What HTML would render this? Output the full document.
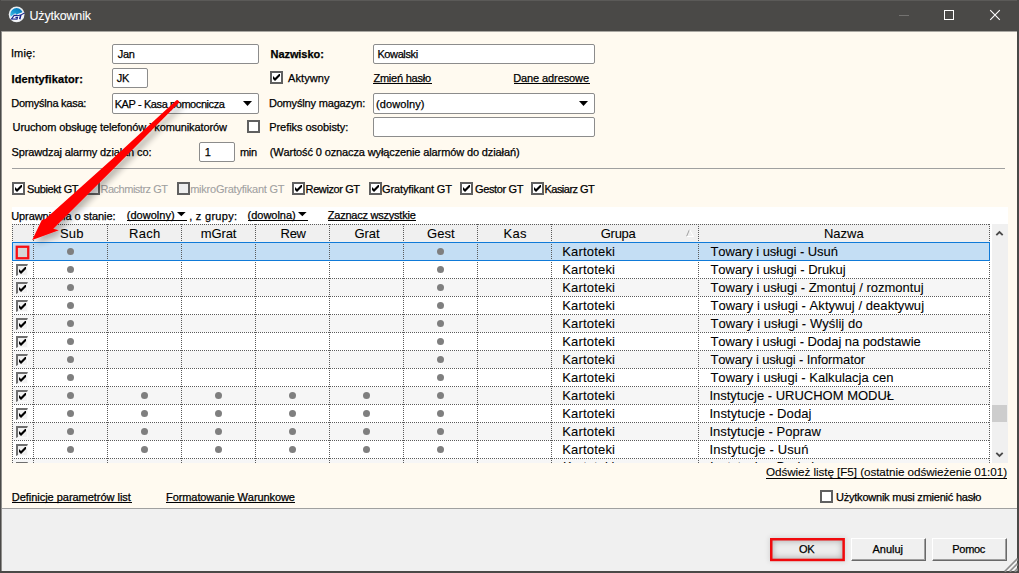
<!DOCTYPE html><html><head><meta charset="utf-8"><title>Użytkownik</title><style>
*{box-sizing:border-box;margin:0;padding:0}
html,body{width:1019px;height:573px;overflow:hidden;background:#fffaf0}
body{position:relative;font-family:"Liberation Sans",sans-serif;color:#000;font-kerning:none;font-variant-ligatures:none}
.a{position:absolute}
.t{position:absolute;white-space:nowrap;line-height:1;height:0;-webkit-text-stroke:0.25px currentColor}
.t.big{-webkit-text-stroke:0.08px currentColor}
.t span{position:absolute;left:0;bottom:0;display:block;line-height:1}
.inp{position:absolute;background:#fff;border:1px solid #8c8c8c;border-radius:2px}
.cb{position:absolute;width:13px;height:13px;border:2px solid #606060;background:#fff}
.cb.dis{background:#eeeeee}
.btn{position:absolute;background:#f0f0f0;border-top:1px solid #fff;border-left:1px solid #fff;border-right:1px solid #696969;border-bottom:1px solid #696969;box-shadow:inset -1px -1px 0 #a0a0a0}
.g{font-family:"Liberation Sans",sans-serif;font-size:13px;position:absolute;white-space:nowrap;line-height:15px;height:15px}
</style></head><body>
<div class="a" style="left:12px;top:207px;width:996px;height:256px;background:#fff"></div>
<div class="a" style="left:0;top:508px;width:1019px;height:65px;background:#f0f0f0;border-top:1px solid #a0a0a0"></div>
<div class="a" style="left:0;top:0;width:1019px;height:31px;background:#4a4947"></div>
<div class="a" style="left:0;top:0;width:1019px;height:1px;background:#5b5a58"></div>
<div class="a" style="left:1px;top:31px;width:1016px;height:1px;background:#a9a7a2"></div>
<div class="a" style="left:0;top:0;width:1px;height:573px;background:#4a4947"></div>
<div class="a" style="left:1px;top:31px;width:1px;height:542px;background:#8f8e8b"></div>
<div class="a" style="left:1017px;top:0;width:2px;height:573px;background:#4a4947"></div>
<div class="a" style="left:0;top:571px;width:1019px;height:2px;background:#4a4947"></div>
<svg class="a" style="left:5px;top:3px" width="24" height="24" viewBox="5 3 24 24">
<defs><linearGradient id="ig" gradientUnits="userSpaceOnUse" x1="18" y1="8" x2="12.5" y2="17"><stop offset="0" stop-color="#0579bd"/><stop offset="0.5" stop-color="#1596d0"/><stop offset="1" stop-color="#4cbfe8"/></linearGradient>
<clipPath id="ic"><circle cx="16.6" cy="14.5" r="6.4"/></clipPath></defs>
<circle cx="16.6" cy="14.4" r="7.9" fill="#eceff3"/>
<circle cx="16.6" cy="14.4" r="6.4" fill="#fbfcfd"/>
<path d="M9,17.2 L11.2,16.4 L13.6,14.6 L15.2,13.2 L16.2,14.6 L22.6,12.2 L24,8 L9,5 Z" fill="url(#ig)" clip-path="url(#ic)"/>
<path d="M22.2,12.3 L25,12.4 L22.6,13.6 Z" fill="#f4f6f9"/>
<path d="M17.7,15.3 L14.2,15.3 L11.5,19 L17,19.2 L17.5,17.3 L15.4,17.3" fill="none" stroke="#18268c" stroke-width="1.2"/>
<path d="M17.2,15.7 L21.4,14.8 L24.6,12.9" fill="none" stroke="#18268c" stroke-width="1.1"/>
<path d="M20.8,15 L19.7,19.3" fill="none" stroke="#18268c" stroke-width="1.6"/>
</svg>
<div class="a" style="left:899px;top:15px;width:10px;height:1px;background:#737270"></div>
<div class="a" style="left:944px;top:10px;width:10px;height:10px;border:1px solid #fff"></div>
<svg class="a" style="left:989px;top:9px" width="12" height="12" viewBox="0 0 12 12"><path d="M1.2,1.2 L10.8,10.8 M10.8,1.2 L1.2,10.8" stroke="#fff" stroke-width="1.1" fill="none"/></svg>
<div class="inp" style="left:112px;top:44px;width:147px;height:20px"></div>
<div class="inp" style="left:112px;top:68px;width:36px;height:20px"></div>
<div class="inp" style="left:112px;top:93px;width:147px;height:21px"></div>
<div class="inp" style="left:373px;top:44px;width:222px;height:20px"></div>
<div class="inp" style="left:373px;top:93px;width:222px;height:21px"></div>
<div class="inp" style="left:373px;top:117px;width:222px;height:20px"></div>
<div class="inp" style="left:199px;top:142px;width:36px;height:20px"></div>
<svg class="a" style="left:243px;top:101px" width="9" height="5" viewBox="0 0 9 5"><path d="M0,0 L9,0 L4.5,5 Z" fill="#000"/></svg>
<svg class="a" style="left:579px;top:101px" width="9" height="5" viewBox="0 0 9 5"><path d="M0,0 L9,0 L4.5,5 Z" fill="#000"/></svg>
<svg class="a" style="left:177px;top:212px" width="9" height="5" viewBox="0 0 9 5"><path d="M0,0 L8.6,0 L4.3,4.3 Z" fill="#000"/></svg>
<svg class="a" style="left:298px;top:212px" width="9" height="5" viewBox="0 0 9 5"><path d="M0,0 L8.6,0 L4.3,4.3 Z" fill="#000"/></svg>
<div class="cb" style="left:270px;top:71px"></div>
<svg class="a" style="left:273px;top:74px" width="7" height="7" viewBox="0 0 7 7"><path d="M0,2 L2,4 L7,-1 L7,2 L2,7 L0,5 Z" fill="#000"/></svg>
<div class="cb" style="left:247px;top:120px"></div>
<div class="cb" style="left:12px;top:182px"></div>
<svg class="a" style="left:15px;top:185px" width="7" height="7" viewBox="0 0 7 7"><path d="M0,2 L2,4 L7,-1 L7,2 L2,7 L0,5 Z" fill="#000"/></svg>
<div class="cb dis" style="left:87px;top:182px"></div>
<div class="cb dis" style="left:177px;top:182px"></div>
<div class="cb" style="left:292px;top:182px"></div>
<svg class="a" style="left:295px;top:185px" width="7" height="7" viewBox="0 0 7 7"><path d="M0,2 L2,4 L7,-1 L7,2 L2,7 L0,5 Z" fill="#000"/></svg>
<div class="cb" style="left:369px;top:182px"></div>
<svg class="a" style="left:372px;top:185px" width="7" height="7" viewBox="0 0 7 7"><path d="M0,2 L2,4 L7,-1 L7,2 L2,7 L0,5 Z" fill="#000"/></svg>
<div class="cb" style="left:460px;top:182px"></div>
<svg class="a" style="left:463px;top:185px" width="7" height="7" viewBox="0 0 7 7"><path d="M0,2 L2,4 L7,-1 L7,2 L2,7 L0,5 Z" fill="#000"/></svg>
<div class="cb" style="left:531px;top:182px"></div>
<svg class="a" style="left:534px;top:185px" width="7" height="7" viewBox="0 0 7 7"><path d="M0,2 L2,4 L7,-1 L7,2 L2,7 L0,5 Z" fill="#000"/></svg>
<div class="cb" style="left:820px;top:490px"></div>
<div class="a" style="left:12px;top:168px;width:993px;height:1px;background:#a0a0a0"></div>
<div class="a" style="left:12px;top:224px;width:978px;height:18px;background:#f0f0f0"></div>
<div class="a" style="left:12px;top:242px;width:978px;height:19px;background:#c4def4"></div>
<div class="a" style="left:12px;top:279px;width:978px;height:17px;background:#f6f6f6"></div>
<div class="a" style="left:12px;top:315px;width:978px;height:17px;background:#f6f6f6"></div>
<div class="a" style="left:12px;top:351px;width:978px;height:17px;background:#f6f6f6"></div>
<div class="a" style="left:12px;top:387px;width:978px;height:17px;background:#f6f6f6"></div>
<div class="a" style="left:12px;top:423px;width:978px;height:17px;background:#f6f6f6"></div>
<div class="a" style="left:12px;top:459px;width:978px;height:4px;background:#f6f6f6"></div>
<svg class="a" style="left:0;top:0" width="1019" height="573" shape-rendering="crispEdges">
<line x1="12" y1="224.5" x2="990" y2="224.5" stroke="#5a5a5a" stroke-width="1" stroke-dasharray="1 1"/>
<line x1="12" y1="278.5" x2="990" y2="278.5" stroke="#5a5a5a" stroke-width="1" stroke-dasharray="1 1"/>
<line x1="12" y1="296.5" x2="990" y2="296.5" stroke="#5a5a5a" stroke-width="1" stroke-dasharray="1 1"/>
<line x1="12" y1="314.5" x2="990" y2="314.5" stroke="#5a5a5a" stroke-width="1" stroke-dasharray="1 1"/>
<line x1="12" y1="332.5" x2="990" y2="332.5" stroke="#5a5a5a" stroke-width="1" stroke-dasharray="1 1"/>
<line x1="12" y1="350.5" x2="990" y2="350.5" stroke="#5a5a5a" stroke-width="1" stroke-dasharray="1 1"/>
<line x1="12" y1="368.5" x2="990" y2="368.5" stroke="#5a5a5a" stroke-width="1" stroke-dasharray="1 1"/>
<line x1="12" y1="386.5" x2="990" y2="386.5" stroke="#5a5a5a" stroke-width="1" stroke-dasharray="1 1"/>
<line x1="12" y1="404.5" x2="990" y2="404.5" stroke="#5a5a5a" stroke-width="1" stroke-dasharray="1 1"/>
<line x1="12" y1="422.5" x2="990" y2="422.5" stroke="#5a5a5a" stroke-width="1" stroke-dasharray="1 1"/>
<line x1="12" y1="440.5" x2="990" y2="440.5" stroke="#5a5a5a" stroke-width="1" stroke-dasharray="1 1"/>
<line x1="12" y1="458.5" x2="990" y2="458.5" stroke="#5a5a5a" stroke-width="1" stroke-dasharray="1 1"/>
<line x1="12.5" y1="224" x2="12.5" y2="463" stroke="#5a5a5a" stroke-width="1" stroke-dasharray="1 1"/>
<line x1="33.5" y1="224" x2="33.5" y2="463" stroke="#5a5a5a" stroke-width="1" stroke-dasharray="1 1"/>
<line x1="107.5" y1="224" x2="107.5" y2="463" stroke="#5a5a5a" stroke-width="1" stroke-dasharray="1 1"/>
<line x1="181.5" y1="224" x2="181.5" y2="463" stroke="#5a5a5a" stroke-width="1" stroke-dasharray="1 1"/>
<line x1="255.5" y1="224" x2="255.5" y2="463" stroke="#5a5a5a" stroke-width="1" stroke-dasharray="1 1"/>
<line x1="329.5" y1="224" x2="329.5" y2="463" stroke="#5a5a5a" stroke-width="1" stroke-dasharray="1 1"/>
<line x1="403.5" y1="224" x2="403.5" y2="463" stroke="#5a5a5a" stroke-width="1" stroke-dasharray="1 1"/>
<line x1="477.5" y1="224" x2="477.5" y2="463" stroke="#5a5a5a" stroke-width="1" stroke-dasharray="1 1"/>
<line x1="551.5" y1="224" x2="551.5" y2="463" stroke="#5a5a5a" stroke-width="1" stroke-dasharray="1 1"/>
<line x1="698.5" y1="224" x2="698.5" y2="463" stroke="#5a5a5a" stroke-width="1" stroke-dasharray="1 1"/>
<line x1="989.5" y1="224" x2="989.5" y2="463" stroke="#5a5a5a" stroke-width="1" stroke-dasharray="1 1"/>
</svg>
<div class="a" style="left:12px;top:242px;width:978px;height:19px;border:1px solid #0f7ad8"></div>
<svg class="a" style="left:686px;top:229px" width="8" height="8" viewBox="0 0 8 8"><path d="M0.5,7.5 L3.5,0.5" stroke="#a0a0a0" stroke-width="1" fill="none"/><path d="M3.5,0.5 L7.5,7.5 L0.5,7.5" stroke="#fff" stroke-width="1" fill="none"/></svg>
<div class="a" style="left:67.0px;top:248px;width:7px;height:7px;border-radius:50%;background:#7f7f7f"></div>
<div class="a" style="left:437.0px;top:248px;width:7px;height:7px;border-radius:50%;background:#7f7f7f"></div>
<svg class="a" style="left:14px;top:244px" width="18" height="18" viewBox="14 244 18 18"><rect x="16.75" y="246.75" width="11.5" height="11.5" fill="#d6d6d6" stroke="#f90f12" stroke-width="2.3"/></svg>
<div class="a" style="left:67.0px;top:266px;width:7px;height:7px;border-radius:50%;background:#7f7f7f"></div>
<div class="a" style="left:437.0px;top:266px;width:7px;height:7px;border-radius:50%;background:#7f7f7f"></div>
<div class="a" style="left:16px;top:264px;width:12px;height:12px;border-top:2px solid #6e6e6e;border-left:2px solid #6e6e6e;border-right:1px solid #fbfbfb;border-bottom:1px solid #fbfbfb;background:#f1f1f1"></div>
<svg class="a" style="left:19px;top:267px" width="7" height="7" viewBox="0 0 7 7"><path d="M0,2 L2,4 L7,-1 L7,2 L2,7 L0,5 Z" fill="#000"/></svg>
<div class="a" style="left:67.0px;top:284px;width:7px;height:7px;border-radius:50%;background:#7f7f7f"></div>
<div class="a" style="left:437.0px;top:284px;width:7px;height:7px;border-radius:50%;background:#7f7f7f"></div>
<div class="a" style="left:16px;top:282px;width:12px;height:12px;border-top:2px solid #6e6e6e;border-left:2px solid #6e6e6e;border-right:1px solid #fbfbfb;border-bottom:1px solid #fbfbfb;background:#f1f1f1"></div>
<svg class="a" style="left:19px;top:285px" width="7" height="7" viewBox="0 0 7 7"><path d="M0,2 L2,4 L7,-1 L7,2 L2,7 L0,5 Z" fill="#000"/></svg>
<div class="a" style="left:67.0px;top:302px;width:7px;height:7px;border-radius:50%;background:#7f7f7f"></div>
<div class="a" style="left:437.0px;top:302px;width:7px;height:7px;border-radius:50%;background:#7f7f7f"></div>
<div class="a" style="left:16px;top:300px;width:12px;height:12px;border-top:2px solid #6e6e6e;border-left:2px solid #6e6e6e;border-right:1px solid #fbfbfb;border-bottom:1px solid #fbfbfb;background:#f1f1f1"></div>
<svg class="a" style="left:19px;top:303px" width="7" height="7" viewBox="0 0 7 7"><path d="M0,2 L2,4 L7,-1 L7,2 L2,7 L0,5 Z" fill="#000"/></svg>
<div class="a" style="left:67.0px;top:320px;width:7px;height:7px;border-radius:50%;background:#7f7f7f"></div>
<div class="a" style="left:437.0px;top:320px;width:7px;height:7px;border-radius:50%;background:#7f7f7f"></div>
<div class="a" style="left:16px;top:318px;width:12px;height:12px;border-top:2px solid #6e6e6e;border-left:2px solid #6e6e6e;border-right:1px solid #fbfbfb;border-bottom:1px solid #fbfbfb;background:#f1f1f1"></div>
<svg class="a" style="left:19px;top:321px" width="7" height="7" viewBox="0 0 7 7"><path d="M0,2 L2,4 L7,-1 L7,2 L2,7 L0,5 Z" fill="#000"/></svg>
<div class="a" style="left:67.0px;top:338px;width:7px;height:7px;border-radius:50%;background:#7f7f7f"></div>
<div class="a" style="left:437.0px;top:338px;width:7px;height:7px;border-radius:50%;background:#7f7f7f"></div>
<div class="a" style="left:16px;top:336px;width:12px;height:12px;border-top:2px solid #6e6e6e;border-left:2px solid #6e6e6e;border-right:1px solid #fbfbfb;border-bottom:1px solid #fbfbfb;background:#f1f1f1"></div>
<svg class="a" style="left:19px;top:339px" width="7" height="7" viewBox="0 0 7 7"><path d="M0,2 L2,4 L7,-1 L7,2 L2,7 L0,5 Z" fill="#000"/></svg>
<div class="a" style="left:67.0px;top:356px;width:7px;height:7px;border-radius:50%;background:#7f7f7f"></div>
<div class="a" style="left:437.0px;top:356px;width:7px;height:7px;border-radius:50%;background:#7f7f7f"></div>
<div class="a" style="left:16px;top:354px;width:12px;height:12px;border-top:2px solid #6e6e6e;border-left:2px solid #6e6e6e;border-right:1px solid #fbfbfb;border-bottom:1px solid #fbfbfb;background:#f1f1f1"></div>
<svg class="a" style="left:19px;top:357px" width="7" height="7" viewBox="0 0 7 7"><path d="M0,2 L2,4 L7,-1 L7,2 L2,7 L0,5 Z" fill="#000"/></svg>
<div class="a" style="left:67.0px;top:374px;width:7px;height:7px;border-radius:50%;background:#7f7f7f"></div>
<div class="a" style="left:437.0px;top:374px;width:7px;height:7px;border-radius:50%;background:#7f7f7f"></div>
<div class="a" style="left:16px;top:372px;width:12px;height:12px;border-top:2px solid #6e6e6e;border-left:2px solid #6e6e6e;border-right:1px solid #fbfbfb;border-bottom:1px solid #fbfbfb;background:#f1f1f1"></div>
<svg class="a" style="left:19px;top:375px" width="7" height="7" viewBox="0 0 7 7"><path d="M0,2 L2,4 L7,-1 L7,2 L2,7 L0,5 Z" fill="#000"/></svg>
<div class="a" style="left:67.0px;top:392px;width:7px;height:7px;border-radius:50%;background:#7f7f7f"></div>
<div class="a" style="left:141.0px;top:392px;width:7px;height:7px;border-radius:50%;background:#7f7f7f"></div>
<div class="a" style="left:215.0px;top:392px;width:7px;height:7px;border-radius:50%;background:#7f7f7f"></div>
<div class="a" style="left:289.0px;top:392px;width:7px;height:7px;border-radius:50%;background:#7f7f7f"></div>
<div class="a" style="left:363.0px;top:392px;width:7px;height:7px;border-radius:50%;background:#7f7f7f"></div>
<div class="a" style="left:437.0px;top:392px;width:7px;height:7px;border-radius:50%;background:#7f7f7f"></div>
<div class="a" style="left:16px;top:390px;width:12px;height:12px;border-top:2px solid #6e6e6e;border-left:2px solid #6e6e6e;border-right:1px solid #fbfbfb;border-bottom:1px solid #fbfbfb;background:#f1f1f1"></div>
<svg class="a" style="left:19px;top:393px" width="7" height="7" viewBox="0 0 7 7"><path d="M0,2 L2,4 L7,-1 L7,2 L2,7 L0,5 Z" fill="#000"/></svg>
<div class="a" style="left:67.0px;top:410px;width:7px;height:7px;border-radius:50%;background:#7f7f7f"></div>
<div class="a" style="left:141.0px;top:410px;width:7px;height:7px;border-radius:50%;background:#7f7f7f"></div>
<div class="a" style="left:215.0px;top:410px;width:7px;height:7px;border-radius:50%;background:#7f7f7f"></div>
<div class="a" style="left:289.0px;top:410px;width:7px;height:7px;border-radius:50%;background:#7f7f7f"></div>
<div class="a" style="left:363.0px;top:410px;width:7px;height:7px;border-radius:50%;background:#7f7f7f"></div>
<div class="a" style="left:437.0px;top:410px;width:7px;height:7px;border-radius:50%;background:#7f7f7f"></div>
<div class="a" style="left:16px;top:408px;width:12px;height:12px;border-top:2px solid #6e6e6e;border-left:2px solid #6e6e6e;border-right:1px solid #fbfbfb;border-bottom:1px solid #fbfbfb;background:#f1f1f1"></div>
<svg class="a" style="left:19px;top:411px" width="7" height="7" viewBox="0 0 7 7"><path d="M0,2 L2,4 L7,-1 L7,2 L2,7 L0,5 Z" fill="#000"/></svg>
<div class="a" style="left:67.0px;top:428px;width:7px;height:7px;border-radius:50%;background:#7f7f7f"></div>
<div class="a" style="left:141.0px;top:428px;width:7px;height:7px;border-radius:50%;background:#7f7f7f"></div>
<div class="a" style="left:215.0px;top:428px;width:7px;height:7px;border-radius:50%;background:#7f7f7f"></div>
<div class="a" style="left:289.0px;top:428px;width:7px;height:7px;border-radius:50%;background:#7f7f7f"></div>
<div class="a" style="left:363.0px;top:428px;width:7px;height:7px;border-radius:50%;background:#7f7f7f"></div>
<div class="a" style="left:437.0px;top:428px;width:7px;height:7px;border-radius:50%;background:#7f7f7f"></div>
<div class="a" style="left:16px;top:426px;width:12px;height:12px;border-top:2px solid #6e6e6e;border-left:2px solid #6e6e6e;border-right:1px solid #fbfbfb;border-bottom:1px solid #fbfbfb;background:#f1f1f1"></div>
<svg class="a" style="left:19px;top:429px" width="7" height="7" viewBox="0 0 7 7"><path d="M0,2 L2,4 L7,-1 L7,2 L2,7 L0,5 Z" fill="#000"/></svg>
<div class="a" style="left:67.0px;top:446px;width:7px;height:7px;border-radius:50%;background:#7f7f7f"></div>
<div class="a" style="left:141.0px;top:446px;width:7px;height:7px;border-radius:50%;background:#7f7f7f"></div>
<div class="a" style="left:215.0px;top:446px;width:7px;height:7px;border-radius:50%;background:#7f7f7f"></div>
<div class="a" style="left:289.0px;top:446px;width:7px;height:7px;border-radius:50%;background:#7f7f7f"></div>
<div class="a" style="left:363.0px;top:446px;width:7px;height:7px;border-radius:50%;background:#7f7f7f"></div>
<div class="a" style="left:437.0px;top:446px;width:7px;height:7px;border-radius:50%;background:#7f7f7f"></div>
<div class="a" style="left:16px;top:444px;width:12px;height:12px;border-top:2px solid #6e6e6e;border-left:2px solid #6e6e6e;border-right:1px solid #fbfbfb;border-bottom:1px solid #fbfbfb;background:#f1f1f1"></div>
<svg class="a" style="left:19px;top:447px" width="7" height="7" viewBox="0 0 7 7"><path d="M0,2 L2,4 L7,-1 L7,2 L2,7 L0,5 Z" fill="#000"/></svg>
<div class="a" style="left:12px;top:459px;width:978px;height:4px;overflow:hidden">
<div class="g" style="left:551px;top:0.2px">Kartoteki</div><div class="g" style="left:698px;top:0.2px">Instytucje - Drukuj</div>
<div class="a" style="left:4px;top:3px;width:12px;height:12px;border-top:2px solid #6e6e6e;border-left:2px solid #6e6e6e;border-right:1px solid #fbfbfb;border-bottom:1px solid #fbfbfb;background:#f1f1f1"></div>
</div>
<div class="a" style="left:992px;top:224px;width:16px;height:239px;background:#f0f0f0"></div>
<div class="a" style="left:992px;top:405px;width:15px;height:17px;background:#cdcdcd"></div>
<svg class="a" style="left:995px;top:230px" width="9" height="6" viewBox="0 0 9 6"><path d="M1.3,5.2 L4.5,2 L7.7,5.2" stroke="#4a4a4a" stroke-width="1.8" fill="none"/></svg>
<svg class="a" style="left:995px;top:452px" width="9" height="6" viewBox="0 0 9 6"><path d="M1.3,0.8 L4.5,4 L7.7,0.8" stroke="#4a4a4a" stroke-width="1.8" fill="none"/></svg>
<div class="a" style="left:770px;top:538px;width:75px;height:23px;box-shadow:0 0 5px 1px rgba(0,0,0,.10)"></div>
<div class="a" style="left:772px;top:540px;width:71px;height:19px;background:#ececec;box-shadow:inset 0 0 6px 1px rgba(0,0,0,.27)"></div>
<svg class="a" style="left:766px;top:534px" width="84" height="32" viewBox="766 534 84 32"><rect x="771.25" y="539.25" width="72.4" height="20.7" fill="none" stroke="#f00a0d" stroke-width="2.5"/></svg>
<div class="btn" style="left:851px;top:538px;width:75px;height:23px"></div>
<div class="btn" style="left:932px;top:538px;width:75px;height:23px"></div>
<svg class="a" style="left:1003.5px;top:557.5px" width="14" height="14" viewBox="0 0 14 14"><path d="M13.5,1.8 L1.8,13.5 M13.5,6.8 L6.8,13.5 M13.5,11.8 L11.8,13.5" stroke="#fff" stroke-width="1"/><path d="M13.5,0.6 L0.6,13.5 M13.5,5.6 L5.6,13.5 M13.5,10.6 L10.6,13.5" stroke="#8c8c8c" stroke-width="1.6"/></svg>
<div class="t big" style="left:29.5px;top:20px;font-size:12.5px;color:#fff;letter-spacing:-0.194px;"><span style="transform:translateY(0.1535em)">Użytkownik</span></div>
<div class="t" style="left:10.9px;top:57px;font-size:11px;letter-spacing:0.150px;"><span style="transform:translateY(0.1535em)">Imię:</span></div>
<div class="t" style="left:11.5px;top:83px;font-size:11px;font-weight:bold;letter-spacing:0.135px;"><span style="transform:translateY(0.1535em)">Identyfikator:</span></div>
<div class="t" style="left:11.3px;top:107px;font-size:11px;letter-spacing:-0.242px;"><span style="transform:translateY(0.1535em)">Domyślna kasa:</span></div>
<div class="t" style="left:12.6px;top:131px;font-size:11px;letter-spacing:-0.114px;"><span style="transform:translateY(0.1535em)">Uruchom obsługę telefonów i komunikatorów</span></div>
<div class="t" style="left:11.5px;top:156px;font-size:11px;letter-spacing:-0.113px;"><span style="transform:translateY(0.1535em)">Sprawdzaj alarmy działań co:</span></div>
<div class="t" style="left:117.7px;top:58px;font-size:11px;letter-spacing:-0.300px;"><span style="transform:translateY(0.1535em)">Jan</span></div>
<div class="t" style="left:116.8px;top:82px;font-size:11px;letter-spacing:-0.300px;"><span style="transform:translateY(0.1535em)">JK</span></div>
<div class="t" style="left:114.7px;top:108px;font-size:11px;letter-spacing:-0.420px;"><span style="transform:translateY(0.1535em)">KAP - Kasa pomocnicza</span></div>
<div class="t" style="left:270.5px;top:58px;font-size:11px;font-weight:bold;letter-spacing:-0.062px;"><span style="transform:translateY(0.1535em)">Nazwisko:</span></div>
<div class="t" style="left:288.0px;top:82px;font-size:11px;letter-spacing:0.083px;"><span style="transform:translateY(0.1535em)">Aktywny</span></div>
<div class="t" style="left:373.4px;top:82px;font-size:11px;letter-spacing:-0.215px;"><span style="transform:translateY(0.1535em)">Zmień hasło</span></div>
<div class="a" style="left:373px;top:83px;width:59px;height:1px;background:#000"></div>
<div class="t" style="left:513.2px;top:82px;font-size:11px;letter-spacing:-0.100px;"><span style="transform:translateY(0.1535em)">Dane adresowe</span></div>
<div class="a" style="left:514px;top:83px;width:76px;height:1px;background:#000"></div>
<div class="t" style="left:268.9px;top:107px;font-size:11px;letter-spacing:-0.169px;"><span style="transform:translateY(0.1535em)">Domyślny magazyn:</span></div>
<div class="t" style="left:269.2px;top:131px;font-size:11px;letter-spacing:-0.056px;"><span style="transform:translateY(0.1535em)">Prefiks osobisty:</span></div>
<div class="t" style="left:377.4px;top:58px;font-size:11px;letter-spacing:-0.386px;"><span style="transform:translateY(0.1535em)">Kowalski</span></div>
<div class="t" style="left:376.1px;top:108px;font-size:11px;letter-spacing:0.081px;"><span style="transform:translateY(0.1535em)">(dowolny)</span></div>
<div class="t" style="left:204.8px;top:156px;font-size:11px;letter-spacing:0.000px;"><span style="transform:translateY(0.1535em)">1</span></div>
<div class="t" style="left:240.0px;top:156px;font-size:11px;letter-spacing:-0.300px;"><span style="transform:translateY(0.1535em)">min</span></div>
<div class="t" style="left:269.8px;top:156px;font-size:11px;letter-spacing:-0.121px;"><span style="transform:translateY(0.1535em)">(Wartość 0 oznacza wyłączenie alarmów do działań)</span></div>
<div class="t" style="left:27.0px;top:193px;font-size:11px;letter-spacing:-0.389px;"><span style="transform:translateY(0.1535em)">Subiekt GT</span></div>
<div class="t big" style="left:100.5px;top:193px;font-size:11px;color:#a0a0a0;letter-spacing:-0.492px;"><span style="transform:translateY(0.1535em)">Rachmistrz GT</span></div>
<div class="t big" style="left:190.2px;top:193px;font-size:11px;color:#a0a0a0;letter-spacing:-0.228px;"><span style="transform:translateY(0.1535em)">mikroGratyfikant GT</span></div>
<div class="t" style="left:305.6px;top:193px;font-size:11px;letter-spacing:-0.406px;"><span style="transform:translateY(0.1535em)">Rewizor GT</span></div>
<div class="t" style="left:382.0px;top:193px;font-size:11px;letter-spacing:-0.115px;"><span style="transform:translateY(0.1535em)">Gratyfikant GT</span></div>
<div class="t" style="left:475.1px;top:193px;font-size:11px;letter-spacing:-0.381px;"><span style="transform:translateY(0.1535em)">Gestor GT</span></div>
<div class="t" style="left:544.5px;top:193px;font-size:11px;letter-spacing:-0.528px;"><span style="transform:translateY(0.1535em)">Kasiarz GT</span></div>
<div class="t" style="left:11.2px;top:220px;font-size:11px;letter-spacing:-0.073px;"><span style="transform:translateY(0.1535em)">Uprawnienia o stanie:</span></div>
<div class="t" style="left:126.7px;top:219px;font-size:11px;letter-spacing:0.044px;"><span style="transform:translateY(0.1535em)">(dowolny)</span></div>
<div class="a" style="left:127px;top:220px;width:60px;height:1px;background:#000"></div>
<div class="t" style="left:189.2px;top:220px;font-size:11px;letter-spacing:0.283px;"><span style="transform:translateY(0.1535em)">, z grupy:</span></div>
<div class="t" style="left:247.5px;top:219px;font-size:11px;letter-spacing:-0.006px;"><span style="transform:translateY(0.1535em)">(dowolna)</span></div>
<div class="a" style="left:248px;top:220px;width:60px;height:1px;background:#000"></div>
<div class="t" style="left:327.8px;top:219px;font-size:11px;letter-spacing:-0.231px;"><span style="transform:translateY(0.1535em)">Zaznacz wszystkie</span></div>
<div class="a" style="left:328px;top:220px;width:88px;height:1px;background:#000"></div>
<div class="t" style="left:11.8px;top:501px;font-size:11px;letter-spacing:-0.031px;"><span style="transform:translateY(0.1535em)">Definicje parametrów list</span></div>
<div class="a" style="left:12px;top:502px;width:120px;height:1px;background:#000"></div>
<div class="t" style="left:166.1px;top:501px;font-size:11px;letter-spacing:-0.098px;"><span style="transform:translateY(0.1535em)">Formatowanie Warunkowe</span></div>
<div class="a" style="left:166px;top:502px;width:129px;height:1px;background:#000"></div>
<div class="t big" style="left:766.0px;top:476px;font-size:11.7px;letter-spacing:-0.070px;"><span style="transform:translateY(0.1535em)">Odśwież listę [F5] (ostatnie odświeżenie 01:01)</span></div>
<div class="a" style="left:766px;top:478px;width:241px;height:1px;background:#000"></div>
<div class="t" style="left:836.0px;top:501px;font-size:11px;letter-spacing:-0.225px;"><span style="transform:translateY(0.1535em)">Użytkownik musi zmienić hasło</span></div>
<div class="t" style="left:799.0px;top:553px;font-size:11px;letter-spacing:-0.250px;"><span style="transform:translateY(0.1535em)">OK</span></div>
<div class="t" style="left:872.5px;top:553px;font-size:11px;letter-spacing:-0.020px;"><span style="transform:translateY(0.1535em)">Anuluj</span></div>
<div class="t" style="left:952.3px;top:553px;font-size:11px;letter-spacing:-0.300px;"><span style="transform:translateY(0.1535em)">Pomoc</span></div>
<div class="t big" style="left:60.0px;top:238px;font-size:13px;letter-spacing:0.150px;"><span style="transform:translateY(0.1535em)">Sub</span></div>
<div class="t big" style="left:129.0px;top:238px;font-size:13px;letter-spacing:0.300px;"><span style="transform:translateY(0.1535em)">Rach</span></div>
<div class="t big" style="left:200.8px;top:238px;font-size:13px;letter-spacing:-0.137px;"><span style="transform:translateY(0.1535em)">mGrat</span></div>
<div class="t big" style="left:280.5px;top:238px;font-size:13px;letter-spacing:-0.250px;"><span style="transform:translateY(0.1535em)">Rew</span></div>
<div class="t big" style="left:354.5px;top:238px;font-size:13px;letter-spacing:-0.050px;"><span style="transform:translateY(0.1535em)">Grat</span></div>
<div class="t big" style="left:427.0px;top:238px;font-size:13px;letter-spacing:0.033px;"><span style="transform:translateY(0.1535em)">Gest</span></div>
<div class="t big" style="left:503.5px;top:238px;font-size:13px;letter-spacing:0.300px;"><span style="transform:translateY(0.1535em)">Kas</span></div>
<div class="t big" style="left:600.8px;top:238px;font-size:13px;letter-spacing:-0.300px;"><span style="transform:translateY(0.1535em)">Grupa</span></div>
<div class="t big" style="left:823.9px;top:238px;font-size:13px;letter-spacing:0.013px;"><span style="transform:translateY(0.1535em)">Nazwa</span></div>
<div class="t big" style="left:562.2px;top:256px;font-size:13px;letter-spacing:0.188px;"><span style="transform:translateY(0.1535em)">Kartoteki</span></div>
<div class="t big" style="left:710.4px;top:256px;font-size:13px;letter-spacing:-0.048px;"><span style="transform:translateY(0.1535em)">Towary i usługi - Usuń</span></div>
<div class="t big" style="left:562.2px;top:274px;font-size:13px;letter-spacing:0.188px;"><span style="transform:translateY(0.1535em)">Kartoteki</span></div>
<div class="t big" style="left:710.4px;top:274px;font-size:13px;letter-spacing:-0.024px;"><span style="transform:translateY(0.1535em)">Towary i usługi - Drukuj</span></div>
<div class="t big" style="left:562.2px;top:292px;font-size:13px;letter-spacing:0.188px;"><span style="transform:translateY(0.1535em)">Kartoteki</span></div>
<div class="t big" style="left:710.4px;top:292px;font-size:13px;letter-spacing:0.000px;"><span style="transform:translateY(0.1535em)">Towary i usługi - Zmontuj / rozmontuj</span></div>
<div class="t big" style="left:562.2px;top:310px;font-size:13px;letter-spacing:0.188px;"><span style="transform:translateY(0.1535em)">Kartoteki</span></div>
<div class="t big" style="left:710.4px;top:310px;font-size:13px;letter-spacing:0.054px;"><span style="transform:translateY(0.1535em)">Towary i usługi - Aktywuj / deaktywuj</span></div>
<div class="t big" style="left:562.2px;top:328px;font-size:13px;letter-spacing:0.188px;"><span style="transform:translateY(0.1535em)">Kartoteki</span></div>
<div class="t big" style="left:710.4px;top:328px;font-size:13px;letter-spacing:0.073px;"><span style="transform:translateY(0.1535em)">Towary i usługi - Wyślij do</span></div>
<div class="t big" style="left:562.2px;top:346px;font-size:13px;letter-spacing:0.188px;"><span style="transform:translateY(0.1535em)">Kartoteki</span></div>
<div class="t big" style="left:710.4px;top:346px;font-size:13px;letter-spacing:-0.061px;"><span style="transform:translateY(0.1535em)">Towary i usługi - Dodaj na podstawie</span></div>
<div class="t big" style="left:562.2px;top:364px;font-size:13px;letter-spacing:0.188px;"><span style="transform:translateY(0.1535em)">Kartoteki</span></div>
<div class="t big" style="left:710.4px;top:364px;font-size:13px;letter-spacing:-0.100px;"><span style="transform:translateY(0.1535em)">Towary i usługi - Informator</span></div>
<div class="t big" style="left:562.2px;top:382px;font-size:13px;letter-spacing:0.188px;"><span style="transform:translateY(0.1535em)">Kartoteki</span></div>
<div class="t big" style="left:710.4px;top:382px;font-size:13px;letter-spacing:0.032px;"><span style="transform:translateY(0.1535em)">Towary i usługi - Kalkulacja cen</span></div>
<div class="t big" style="left:562.2px;top:400px;font-size:13px;letter-spacing:0.188px;"><span style="transform:translateY(0.1535em)">Kartoteki</span></div>
<div class="t big" style="left:709.4px;top:400px;font-size:13px;letter-spacing:-0.010px;"><span style="transform:translateY(0.1535em)">Instytucje - URUCHOM MODUŁ</span></div>
<div class="t big" style="left:562.2px;top:418px;font-size:13px;letter-spacing:0.188px;"><span style="transform:translateY(0.1535em)">Kartoteki</span></div>
<div class="t big" style="left:709.4px;top:418px;font-size:13px;letter-spacing:0.094px;"><span style="transform:translateY(0.1535em)">Instytucje - Dodaj</span></div>
<div class="t big" style="left:562.2px;top:436px;font-size:13px;letter-spacing:0.188px;"><span style="transform:translateY(0.1535em)">Kartoteki</span></div>
<div class="t big" style="left:709.4px;top:436px;font-size:13px;letter-spacing:0.053px;"><span style="transform:translateY(0.1535em)">Instytucje - Popraw</span></div>
<div class="t big" style="left:562.2px;top:454px;font-size:13px;letter-spacing:0.188px;"><span style="transform:translateY(0.1535em)">Kartoteki</span></div>
<div class="t big" style="left:709.4px;top:454px;font-size:13px;letter-spacing:0.141px;"><span style="transform:translateY(0.1535em)">Instytucje - Usuń</span></div>
<svg class="a" style="left:0;top:0" width="1019" height="573"><defs><filter id="sh" x="-20%" y="-20%" width="150%" height="150%"><feGaussianBlur in="SourceAlpha" stdDeviation="3"/><feOffset dx="4" dy="4"/><feComponentTransfer><feFuncA type="linear" slope="0.28"/></feComponentTransfer><feMerge><feMergeNode/><feMergeNode in="SourceGraphic"/></feMerge></filter></defs>
<path d="M176.4,100.2 L177.6,100 L179.2,101.4 L179.2,102.4 Q116.6,165.9 53.3,228.8 L58.8,230.2 L32.2,240 L41.8,220 L45.3,219 Q111.6,160.3 176.4,100.2 Z" fill="#ff0000" filter="url(#sh)"/></svg>
</body></html>
